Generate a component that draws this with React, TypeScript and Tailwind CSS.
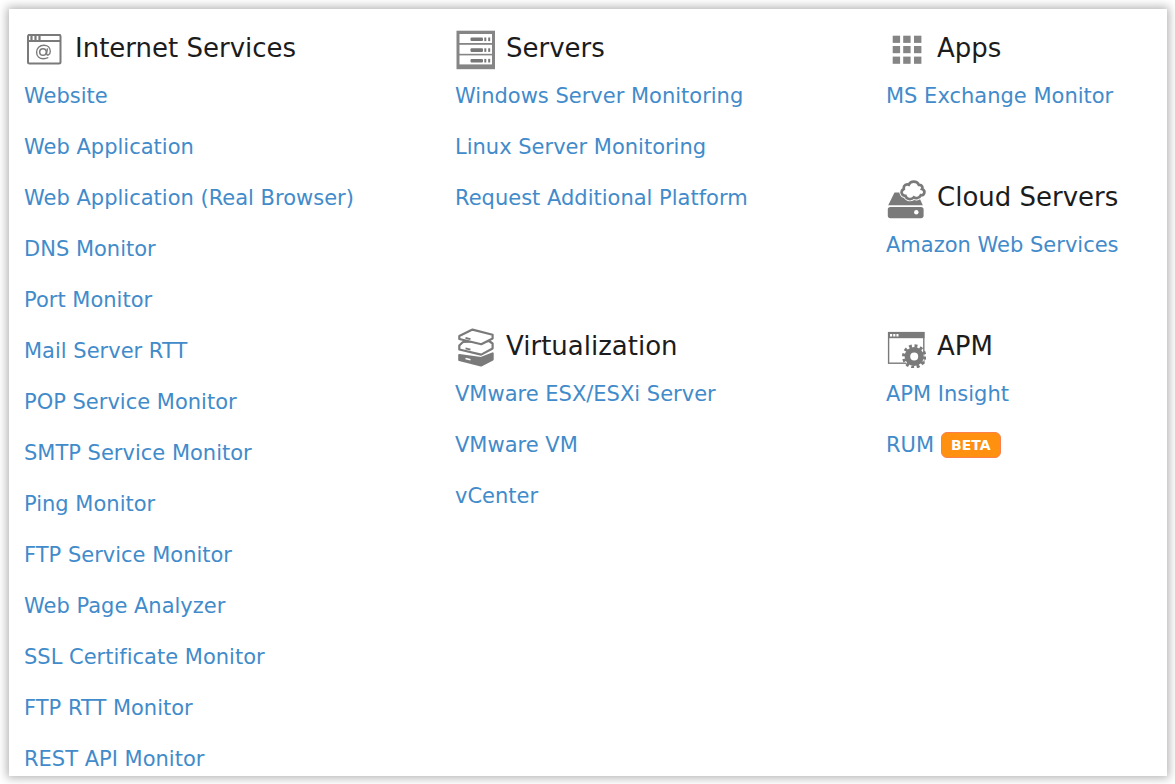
import type { ReactNode } from "react";

type Item = { label: string; badge?: string };
type Group = { title: string; icon: ReactNode; items: Item[] };

function Icon({ children }: { children: ReactNode }) {
  return (
    <svg viewBox="0 0 40 44" className="h-11 w-10 shrink-0" fill="none" stroke="#7a7a7a" aria-hidden="true">
      {children}
    </svg>
  );
}

const internetIcon = (
  <Icon>
    <rect x="4" y="9" width="32.5" height="28.5" rx="1.5" strokeWidth="2" />
    <path d="M4 9H36.5M4 15H36.5" strokeWidth="1.8" />
    <path d="M7.5 10v4M11.5 10v4M15.5 10v4" strokeWidth="2.2" />
    <circle cx="19" cy="26" r="3.3" strokeWidth="1.5" />
    <path d="M23.5 22.3L22.6 27.4C22.5 30.3 26.3 29 26.3 25.2C26.3 21.5 23.4 19.2 19.8 19.2C15.6 19.2 12.6 22.2 12.6 26.2C12.6 30.2 15.4 32.7 19.4 32.7C21.2 32.7 22.8 32.3 24.3 31.5" strokeWidth="1.4" />
  </Icon>
);

const serversIcon = (
  <Icon>
    <rect x="1.5" y="4.7" width="38.5" height="38.5" fill="#858585" stroke="none" />
    {[8, 18.8, 29.4].map((y) => (
      <g key={y} stroke="none">
        <rect x="4.5" y={y} width="32.5" height="9" fill="#fff" />
        <rect x="15.5" y={y + 3.5} width="12.5" height="3.6" rx="1" fill="#777" />
        <rect x="29.3" y={y + 3.5} width="2" height="3.6" fill="#777" />
        <rect x="33.2" y={y + 3.5} width="2" height="3.6" fill="#777" />
      </g>
    ))}
  </Icon>
);

const appsIcon = (
  <Icon>
    {[9.7, 20, 30.6].map((y) =>
      [6.7, 17.2, 28].map((x) => (
        <rect key={`${x}-${y}`} x={x} y={y} width="7.4" height="7.2" fill="#858585" stroke="none" />
      )),
    )}
  </Icon>
);

const cloudPath =
  "M19.5 20.8C15.5 21 14 16 17.8 14C17.2 9.8 21 8.7 22.8 9.7C24.5 5.6 31 5.4 32.8 9.8C36.5 9.6 36.8 12.8 36 14C40 15.6 38.5 20.7 34.8 20.2C33.5 23.4 29.5 23.8 27.8 22.4C25 25.4 20.5 24.2 19.5 20.8Z";

const cloudIcon = (
  <Icon>
    <path d="M8.5 17.5H31L36.8 30.2H2.2Z" fill="#7a7a7a" stroke="none" />
    <rect x="1.8" y="32" width="35.8" height="11.2" rx="2.6" fill="#7a7a7a" stroke="none" />
    <circle cx="30.3" cy="37.2" r="2.2" fill="#fff" stroke="none" />
    <path d={cloudPath} fill="#fff" stroke="#fff" strokeWidth="4.4" />
    <path d={cloudPath} fill="#fff" strokeWidth="2.7" />
  </Icon>
);

const virtualizationIcon = (
  <Icon>
    <g strokeWidth="2.2" strokeLinejoin="round">
      <path d="M4.3 31L26 34L37.6 29.5V35.5L26 41.5L4.3 36Z" fill="#7a7a7a" />
      <path d="M4.3 21.5L8 18L34 17L37.6 19.5V24.5L26.2 30.6L4.3 25.5Z" fill="#fff" stroke="#fff" strokeWidth="3.2" />
      <path d="M4.3 21.5L8 18L34 17L37.6 19.5V24.5L26.2 30.6L4.3 25.5Z" fill="#fff" />
      <path d="M4.3 12L17.5 5.6L37.6 10.8V14.5L26.3 20.2L4.3 15Z" fill="#fff" />
    </g>
    <path d="M10.5 14L15.5 15.2M10.5 24.4L15.5 25.6" strokeWidth="1.8" />
    <path d="M10.5 34.5L15.5 35.8" stroke="#fff" strokeWidth="1.6" />
  </Icon>
);

const apmIcon = (
  <Icon>
    <rect x="2.6" y="8.6" width="35.2" height="30.6" strokeWidth="1.4" fill="#fff" />
    <rect x="2" y="8" width="36.5" height="6.2" fill="#7a7a7a" stroke="none" />
    <path d="M4 11.2H12.5" stroke="#fff" strokeWidth="2.4" strokeDasharray="2.2 1" />
    <circle cx="28.2" cy="32.5" r="10" fill="#fff" stroke="#fff" />
    <circle cx="28.2" cy="32.5" r="10.6" strokeWidth="3.2" strokeDasharray="2.9 2.65" />
    <circle cx="28.2" cy="32.5" r="6.8" strokeWidth="5.6" />
  </Icon>
);

const internet: Group = {
  title: "Internet Services",
  icon: internetIcon,
  items: [
    { label: "Website" },
    { label: "Web Application" },
    { label: "Web Application (Real Browser)" },
    { label: "DNS Monitor" },
    { label: "Port Monitor" },
    { label: "Mail Server RTT" },
    { label: "POP Service Monitor" },
    { label: "SMTP Service Monitor" },
    { label: "Ping Monitor" },
    { label: "FTP Service Monitor" },
    { label: "Web Page Analyzer" },
    { label: "SSL Certificate Monitor" },
    { label: "FTP RTT Monitor" },
    { label: "REST API Monitor" },
  ],
};

const servers: Group = {
  title: "Servers",
  icon: serversIcon,
  items: [
    { label: "Windows Server Monitoring" },
    { label: "Linux Server Monitoring" },
    { label: "Request Additional Platform" },
  ],
};

const virtualization: Group = {
  title: "Virtualization",
  icon: virtualizationIcon,
  items: [{ label: "VMware ESX/ESXi Server" }, { label: "VMware VM" }, { label: "vCenter" }],
};

const apps: Group = { title: "Apps", icon: appsIcon, items: [{ label: "MS Exchange Monitor" }] };

const cloud: Group = { title: "Cloud Servers", icon: cloudIcon, items: [{ label: "Amazon Web Services" }] };

const apm: Group = {
  title: "APM",
  icon: apmIcon,
  items: [{ label: "APM Insight" }, { label: "RUM", badge: "BETA" }],
};

function Section({ group }: { group: Group }) {
  return (
    <section>
      <h2 className="mb-[10px] flex h-[46px] items-center gap-[11px] text-[26px] leading-[46px] whitespace-nowrap text-[#1c1c1c]">
        {group.icon}
        {group.title}
      </h2>
      <ul className="flex flex-col gap-[21px]">
        {group.items.map((item) => (
          <li key={item.label} className="flex h-[30px] items-center gap-[7px] whitespace-nowrap">
            <a href="#" className="text-[21px] leading-[30px] text-[#428bca] hover:underline">
              {item.label}
            </a>
            {item.badge && (
              <span className="flex h-[26px] items-center rounded-md border border-[#fb7f4a] bg-[#ff9010] px-[9px] text-[14px] leading-[24px] font-bold text-white">
                {item.badge}
              </span>
            )}
          </li>
        ))}
      </ul>
    </section>
  );
}

export default function App() {
  return (
    <div className="bg-white pt-[9px] pr-2 pb-2 pl-[9px] font-['DejaVu_Sans',sans-serif] [font-variant-ligatures:none]">
      <main className="grid grid-cols-[431fr_431fr_281fr] bg-white pt-4 pb-[2px] pl-[15px] shadow-[0_0_9px_2px_rgba(0,0,0,0.3)]">
        <div className="min-w-0">
          <Section group={internet} />
        </div>
        <div className="flex min-w-0 flex-col gap-[110px]">
          <Section group={servers} />
          <Section group={virtualization} />
        </div>
        <div className="flex min-w-0 flex-col gap-[63px]">
          <Section group={apps} />
          <Section group={cloud} />
          <Section group={apm} />
        </div>
      </main>
    </div>
  );
}
